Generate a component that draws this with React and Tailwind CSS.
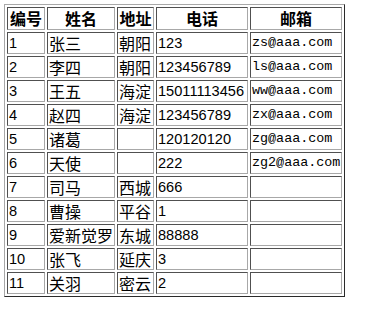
import React from "react";

const rows = [
  ["1", "张三", "朝阳", "123", "zs@aaa.com"],
  ["2", "李四", "朝阳", "123456789", "ls@aaa.com"],
  ["3", "王五", "海淀", "15011113456", "ww@aaa.com"],
  ["4", "赵四", "海淀", "123456789", "zx@aaa.com"],
  ["5", "诸葛", "", "120120120", "zg@aaa.com"],
  ["6", "天使", "", "222", "zg2@aaa.com"],
  ["7", "司马", "西城", "666", ""],
  ["8", "曹操", "平谷", "1", ""],
  ["9", "爱新觉罗", "东城", "88888", ""],
  ["10", "张飞", "延庆", "3", ""],
  ["11", "关羽", "密云", "2", ""],
];

const cellBase =
  "border border-t-[#505050] border-l-[#505050] border-r-[#a8a8a8] border-b-[#a8a8a8] p-px align-middle whitespace-nowrap";

const numFont = "font-['Liberation_Sans','Noto_Sans_CJK_SC',sans-serif] text-[14.6px]";
const cjkFont = "font-['Noto_Sans_CJK_SC',sans-serif] text-[16px]";
const monoFont = "font-['Liberation_Mono',monospace] text-[13.4px]";

function Cell({ font, children }) {
  return (
    <td className={`${cellBase} text-left`}>
      <div className={`h-[18px] leading-[18px] overflow-visible ${font}`}>{children}</div>
    </td>
  );
}

export default function App() {
  return (
    <div className="bg-white w-[369px] h-[313px] pt-1 pl-1">
      <table className="table-fixed border-separate border-spacing-[2px] w-[341px] border border-t-[#a8a8a8] border-l-[#a8a8a8] border-r-[#2a2a2a] border-b-[#2a2a2a] text-black">
        <colgroup>
          <col className="w-[38px]" />
          <col className="w-[68px]" />
          <col className="w-[37px]" />
          <col className="w-[92px]" />
          <col className="w-[92px]" />
        </colgroup>
        <thead>
          <tr>
            {["编号", "姓名", "地址", "电话", "邮箱"].map((h) => (
              <th key={h} className={`${cellBase} text-center`}>
                <div className={`h-[19px] leading-[19px] font-bold ${cjkFont}`}>{h}</div>
              </th>
            ))}
          </tr>
        </thead>
        <tbody>
          {rows.map((r) => (
            <tr key={r[0]}>
              <Cell font={numFont}>{r[0]}</Cell>
              <Cell font={cjkFont}>{r[1]}</Cell>
              <Cell font={cjkFont}>{r[2]}</Cell>
              <Cell font={numFont}>{r[3]}</Cell>
              <Cell font={monoFont}>{r[4]}</Cell>
            </tr>
          ))}
        </tbody>
      </table>
    </div>
  );
}
